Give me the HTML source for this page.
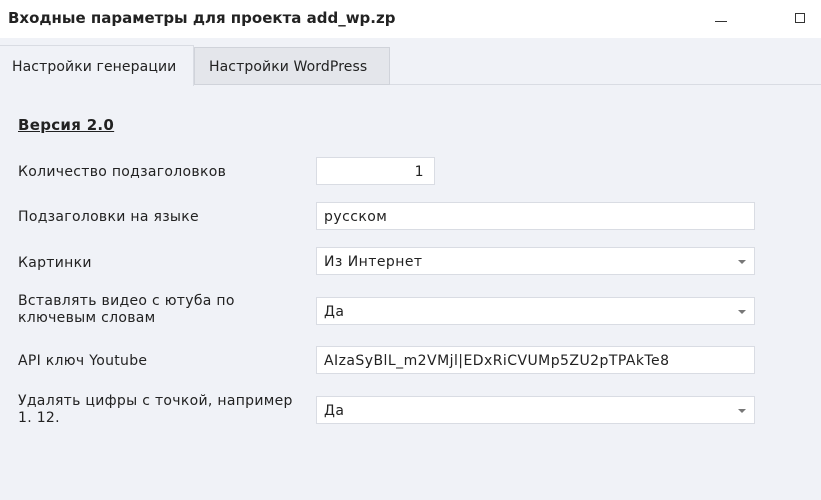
<!DOCTYPE html>
<html><head><meta charset="utf-8"><style>
body{margin:0;width:821px;height:500px;background:#f0f2f7;font-family:"DejaVu Sans",sans-serif;font-size:14px;letter-spacing:0.3px;color:#222;position:relative;overflow:hidden}
.t{position:absolute;left:0;top:0;width:821px;height:38px;background:#fff}
.t b{position:absolute;left:8px;top:9px;font-size:15px;color:#222;letter-spacing:0}
.a{position:absolute;white-space:nowrap}
.inp{position:absolute;left:316px;width:437px;height:26px;background:#fff;border:1px solid #d9dce3}
.inp span{position:absolute;left:7px;top:6px;white-space:nowrap;letter-spacing:0.45px}
.arr{position:absolute;right:8px;top:12px;width:0;height:0;border-left:4px solid transparent;border-right:4px solid transparent;border-top:4px solid #777}
.l{position:absolute;left:18px;line-height:17px;white-space:nowrap}
</style></head><body>
<div class="t"><b>Входные параметры для проекта add_wp.zp</b>
<div class="a" style="left:715px;top:21px;width:12px;height:1px;background:#333"></div>
<div class="a" style="left:795px;top:13px;width:8px;height:8px;border:1px solid #333"></div></div>
<div class="a" style="left:0;top:84px;width:821px;height:1px;background:#d9dce3"></div>
<div class="a" style="left:0;top:45px;width:193px;height:40px;background:#f0f2f7;border-right:1px solid #d9dce3;border-top:1px solid #d9dce3"></div>
<div class="a" style="left:12px;top:59px;letter-spacing:0.1px">Настройки генерации</div>
<div class="a" style="left:194px;top:47px;width:194px;height:36px;background:#e4e6eb;border:1px solid #d0d3da"></div>
<div class="a" style="left:209px;top:59px;letter-spacing:0.1px">Настройки WordPress</div>
<div class="a" style="left:18px;top:116px;font-weight:bold;font-size:15px;text-decoration:underline">Версия 2.0</div>
<div class="l" style="top:164px">Количество подзаголовков</div>
<div class="inp" style="top:157px;width:117px"><span style="left:auto;right:10px">1</span></div>
<div class="l" style="top:209px">Подзаголовки на языке</div>
<div class="inp" style="top:202px"><span>русском</span></div>
<div class="l" style="top:255px">Картинки</div>
<div class="inp" style="top:247px"><span>Из Интернет</span><i class="arr"></i></div>
<div class="l" style="top:293px">Вставлять видео с ютуба по<br>ключевым словам</div>
<div class="inp" style="top:297px"><span>Да</span><i class="arr"></i></div>
<div class="l" style="top:353px">API ключ Youtube</div>
<div class="inp" style="top:346px"><span>AIzaSyBlL_m2VMjl|EDxRiCVUMp5ZU2pTPAkTe8</span></div>
<div class="l" style="top:393px">Удалять цифры с точкой, например<br>1. 12.</div>
<div class="inp" style="top:396px"><span>Да</span><i class="arr"></i></div>
</body></html>
